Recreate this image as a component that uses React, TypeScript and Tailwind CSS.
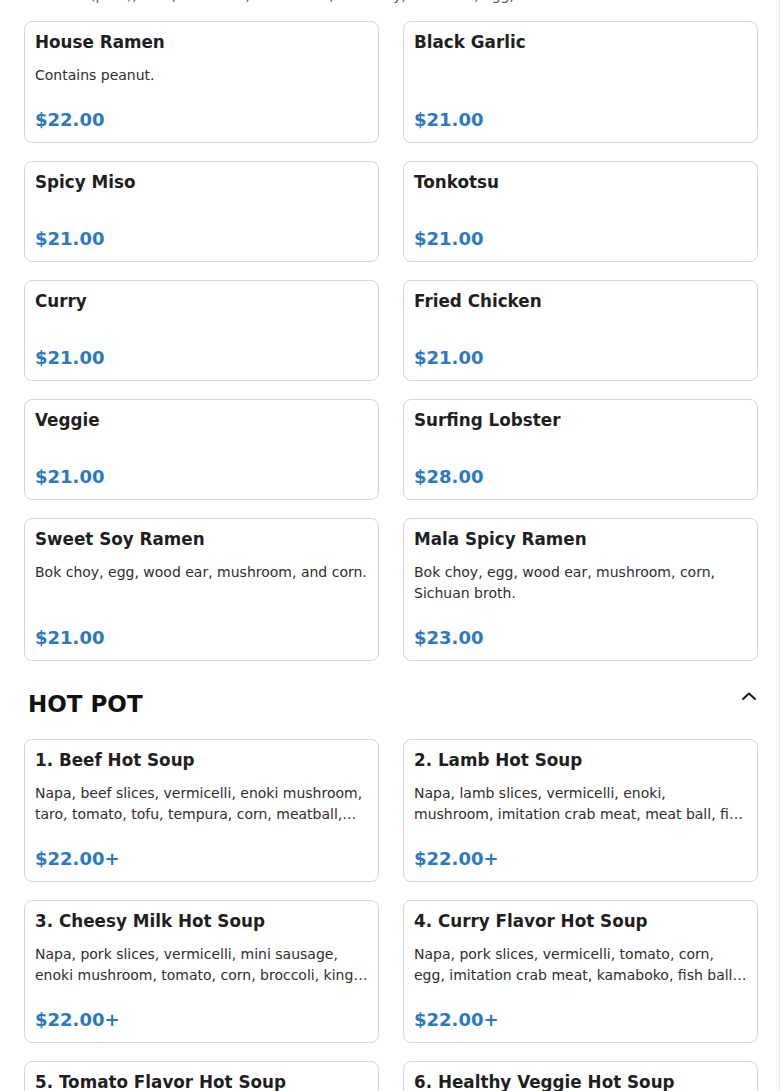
import React from "react";

type Item = { name: string; desc?: string; price: string };

const ramen: Item[] = [
  { name: "House Ramen", desc: "Contains peanut.", price: "$22.00" },
  { name: "Black Garlic", price: "$21.00" },
  { name: "Spicy Miso", price: "$21.00" },
  { name: "Tonkotsu", price: "$21.00" },
  { name: "Curry", price: "$21.00" },
  { name: "Fried Chicken", price: "$21.00" },
  { name: "Veggie", price: "$21.00" },
  { name: "Surfing Lobster", price: "$28.00" },
  { name: "Sweet Soy Ramen", desc: "Bok choy, egg, wood ear, mushroom, and corn.", price: "$21.00" },
  { name: "Mala Spicy Ramen", desc: "Bok choy, egg, wood ear, mushroom, corn, Sichuan broth.", price: "$23.00" },
];

const hotpot: Item[] = [
  {
    name: "1. Beef Hot Soup",
    desc: "Napa, beef slices, vermicelli, enoki mushroom, taro, tomato, tofu, tempura, corn, meatball, fish ball, and kamaboko.",
    price: "$22.00+",
  },
  {
    name: "2. Lamb Hot Soup",
    desc: "Napa, lamb slices, vermicelli, enoki, mushroom, imitation crab meat, meat ball, fish ball, tofu, and corn.",
    price: "$22.00+",
  },
  {
    name: "3. Cheesy Milk Hot Soup",
    desc: "Napa, pork slices, vermicelli, mini sausage, enoki mushroom, tomato, corn, broccoli, king oyster mushroom, and cheese.",
    price: "$22.00+",
  },
  {
    name: "4. Curry Flavor Hot Soup",
    desc: "Napa, pork slices, vermicelli, tomato, corn, egg, imitation crab meat, kamaboko, fish ball, and tofu.",
    price: "$22.00+",
  },
  {
    name: "5. Tomato Flavor Hot Soup",
    desc: "Napa, pork slices, vermicelli, tomato, corn, egg, tofu, fish ball, and enoki mushroom.",
    price: "$22.00+",
  },
  {
    name: "6. Healthy Veggie Hot Soup",
    desc: "Napa, vermicelli, tofu, broccoli, corn, tomato, enoki mushroom, and king oyster mushroom.",
    price: "$22.00+",
  },
];

function Card({ item }: { item: Item }) {
  return (
    <div className="flex flex-col rounded-lg border border-[#d6d6d6] bg-white px-[10px] pt-2 pb-2">
      <h3 className="text-[16.8px] font-bold leading-[24px] text-[#1f1f1f]">{item.name}</h3>
      {item.desc ? (
        <p className="mt-[11px] line-clamp-2 text-[14px] leading-[21px] text-[#2e2e2e]">{item.desc}</p>
      ) : (
        <div className="mt-[11px]" />
      )}
      <div className="mt-auto pt-5 text-[18px] font-bold leading-7 text-[#2b79bf]">{item.price}</div>
    </div>
  );
}

function ChevronUp() {
  return (
    <svg width="16" height="10" viewBox="0 0 16 10" fill="none">
      <polyline points="2,8 8,2.5 14,8" stroke="#1a1a1a" strokeWidth="2" strokeLinecap="round" strokeLinejoin="round" />
    </svg>
  );
}

export default function App() {
  return (
    <div
      className="w-[780px] overflow-hidden border-r border-[#ececec] bg-white pl-6 pr-[21px]"
      style={{ fontFamily: '"DejaVu Sans", Verdana, sans-serif' }}
    >
      <p className="-mt-[15px] pl-1 text-[14px] leading-[21px] text-[#555]">
        Char siu (pork), corn, wood ear, mushroom, bok choy, kamboko, egg, and scallion.
      </p>
      <div className="mt-[15px] grid grid-cols-2 gap-x-6 gap-y-[18px]">
        {ramen.map((it) => (
          <Card key={it.name} item={it} />
        ))}
      </div>

      <div className="mt-[27px] flex items-center justify-between pl-1 pr-[1px]">
        <h2 className="text-[23px] font-bold leading-8 text-[#111]">HOT POT</h2>
        <div className="-mt-4">
          <ChevronUp />
        </div>
      </div>

      <div className="mt-[19px] grid grid-cols-2 gap-x-6 gap-y-[18px] pb-6">
        {hotpot.map((it) => (
          <Card key={it.name} item={it} />
        ))}
      </div>
    </div>
  );
}
